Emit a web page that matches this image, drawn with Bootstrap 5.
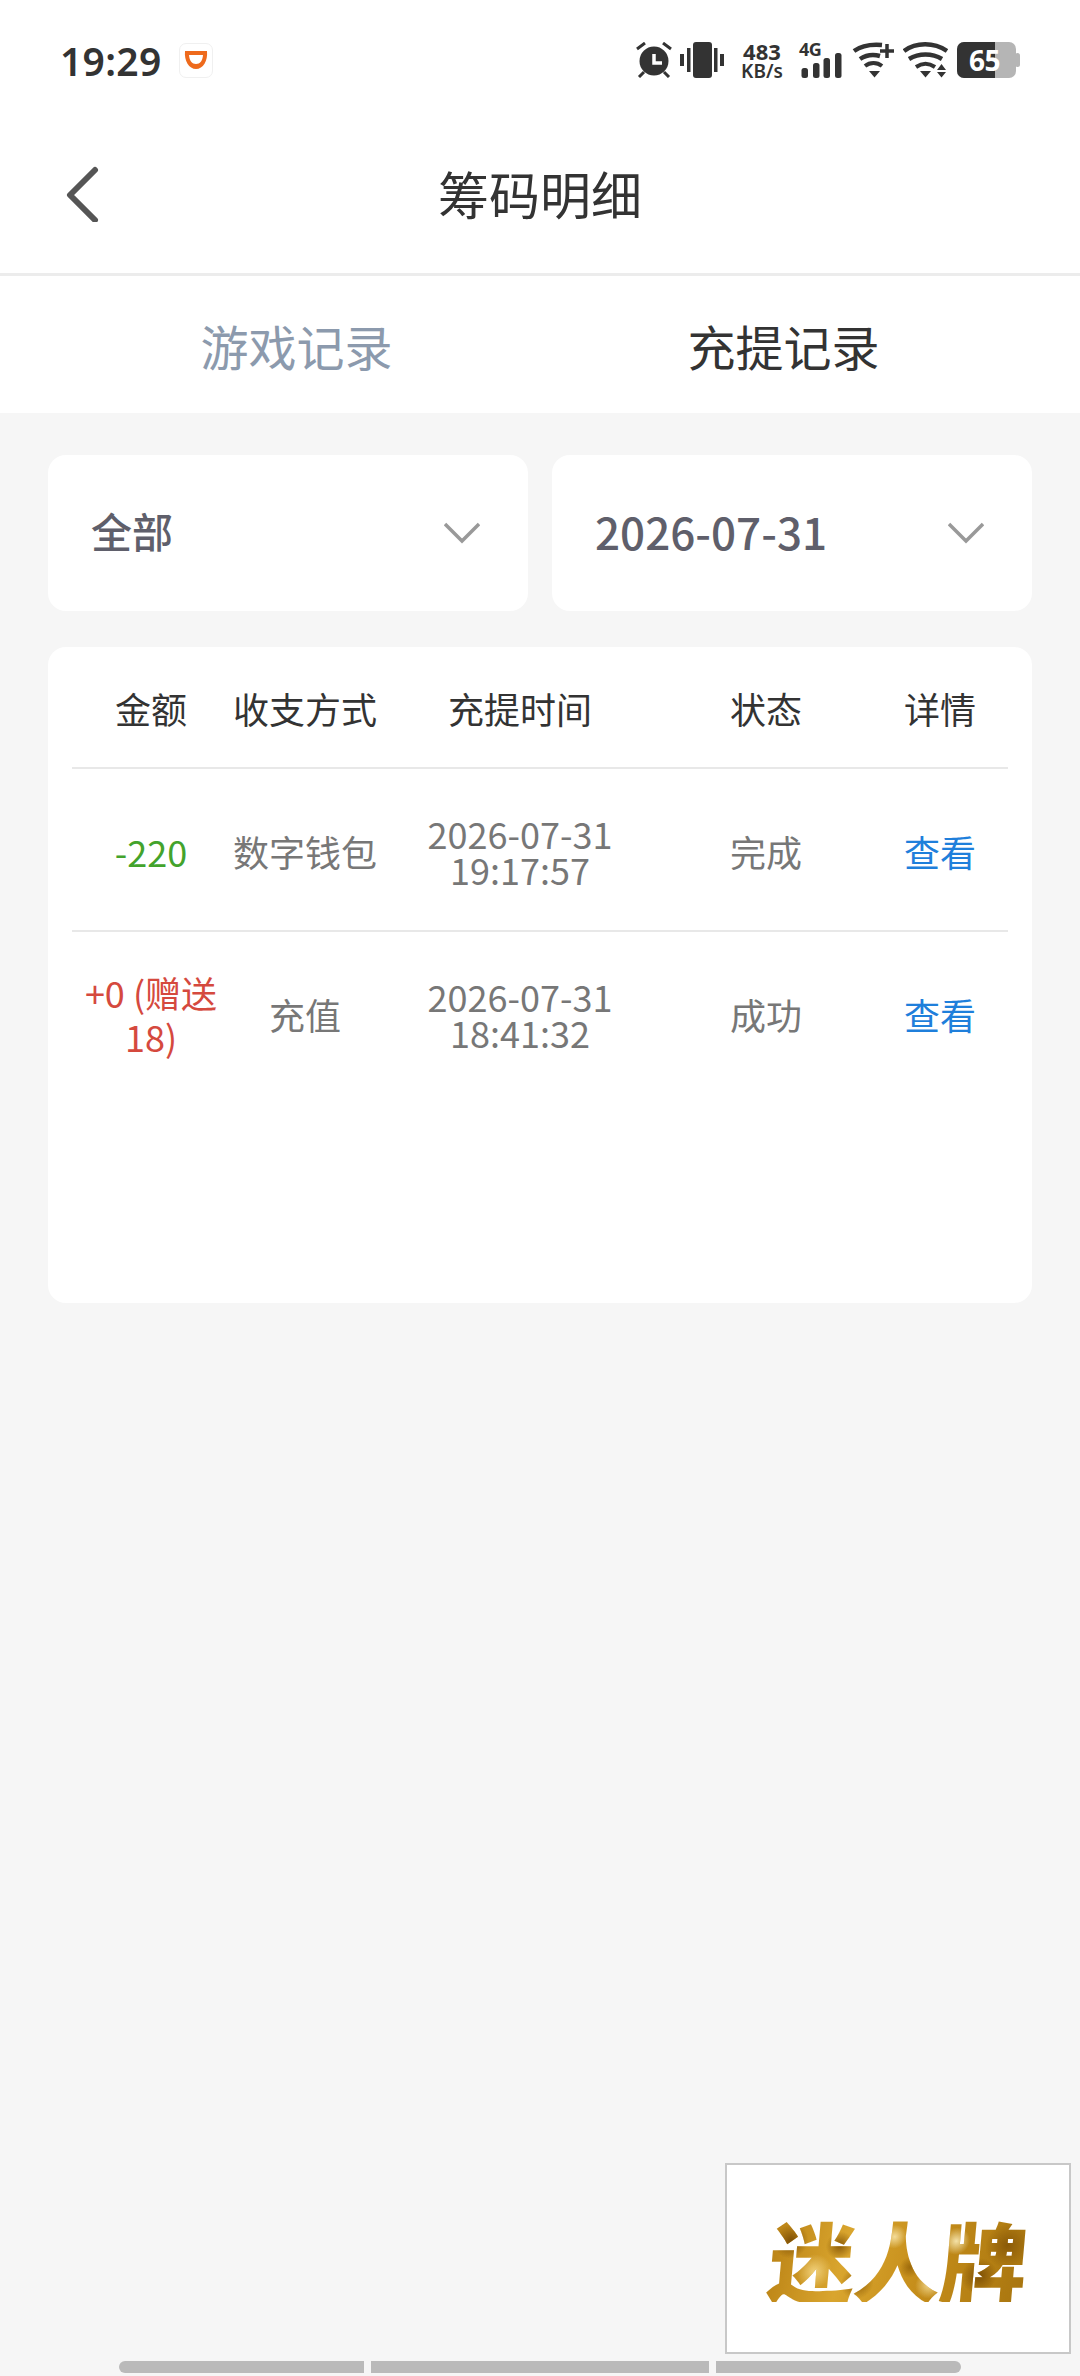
<!DOCTYPE html>
<html lang="zh"><head><meta charset="utf-8"><title>筹码明细</title>
<link href="https://cdn.jsdelivr.net/npm/bootstrap@5.3.0/dist/css/bootstrap.min.css" rel="stylesheet">
<style>
html,body{width:1080px;height:2376px;overflow:hidden;}
body{background:#f6f6f6;font-family:"Noto Sans CJK SC","Noto Sans",sans-serif;color:#333;position:relative;}
.statusbar{height:120px;padding-left:60px;background:#fff;}
.clock{font:600 39px/1 "Noto Sans","Roboto",sans-serif;color:#333;letter-spacing:.3px;}
.appicon{width:34px;height:35px;border:1px solid #f0f0f0;border-radius:7px;margin-left:17px;}
.sysicons{margin-left:auto;margin-right:60px;}
.speed{font:600 19px/18px "Noto Sans",sans-serif;color:#333;text-align:center;width:42px;margin:0 16px 0 17px;white-space:nowrap;}
.speed b{font-size:22px;font-weight:700;display:block;line-height:21px;}
.signalwrap{width:43px;height:36px;margin-right:10px;}
.fourg{left:0;top:-2px;font:700 18px/18px "Noto Sans",sans-serif;color:#333;letter-spacing:-.5px;}
.batterywrap{width:63px;height:36px;margin-left:9px;}
.battnum{left:12px;top:0;font:700 28px/36px "Noto Sans",sans-serif;color:#fff;letter-spacing:-.5px;}
.titlebar{height:156px;padding-bottom:7px;border-bottom:3px solid #ececec;background:#fff;}
.titletext{font-size:51px;line-height:1;color:#333;}
.backbtn{left:65px;top:46px;line-height:0;}
.tabbar{height:137px;padding:0 0 0 53px;background:#fff;}
.tabitem{font-size:48px;line-height:1;width:487px;}
.tabmuted{color:#8c9aad;}
.tabactive{color:#333;}
.content{padding:42px 48px 0;}
.pickrow{gap:24px;}
.picker{width:480px;height:156px;border-radius:18px;background:#fff;padding:0 48px 0 43px;font-size:41px;font-weight:500;color:#5f5f6b;}
.picklabel{padding-bottom:4px;}
.pickdate{font-size:44px;line-height:1;}
.recordcard{height:656px;margin-top:36px;background:#fff;border-radius:18px;padding:0 24px;}
.rowhead{height:122px;padding-top:2px;border-bottom:2px solid #e8e8e8;color:#333;font-size:36px;}
.rowdata{height:163px;padding-top:2px;border-bottom:2px solid #e8e8e8;color:#777;font-size:36px;}
.rowdata:last-child{border-bottom:0;padding-top:0;}
.c1{width:158px;text-align:center;line-height:44px;}
.c2{width:150px;text-align:center;}
.c3{width:280px;text-align:center;}
.c4{width:212px;text-align:center;}
.c5{width:136px;text-align:center;}
.stamp{line-height:36px;}
.greenamt{color:#43a32c;}
.redamt{color:#d5493e;}
.linkview{color:#1f7fdb;text-decoration:none;}
.logobox{position:absolute;left:725px;top:2163px;width:346px;height:191px;background:#fff;border:2px solid #c8c8c8;}
.logotext{font-weight:900;font-size:87px;line-height:1;letter-spacing:-1px;transform:skewX(-5deg);color:transparent;
background:
radial-gradient(circle at 8% 30%,#7d4f05 0,transparent 7%),
radial-gradient(circle at 18% 65%,#f0d07a 0,transparent 8%),
radial-gradient(circle at 27% 35%,#8a5a08 0,transparent 7%),
radial-gradient(circle at 35% 78%,#8f5e0a 0,transparent 9%),
radial-gradient(circle at 48% 25%,#f3dc9a 0,transparent 8%),
radial-gradient(circle at 55% 60%,#9c6a0c 0,transparent 7%),
radial-gradient(circle at 63% 80%,#f0d68c 0,transparent 8%),
radial-gradient(circle at 72% 30%,#f4e2a8 0,transparent 7%),
radial-gradient(circle at 82% 70%,#7d4f05 0,transparent 8%),
radial-gradient(circle at 92% 35%,#8a5a08 0,transparent 9%),
linear-gradient(100deg,#b98114,#d9a52e 30%,#c58d1a 60%,#a8750f);
-webkit-background-clip:text;background-clip:text;}
.scrollwrap{position:absolute;left:119px;top:2361px;height:12px;gap:7px;}
.scrollseg{height:12px;background:#bababa;}
.seg1{width:245px;border-radius:6px 0 0 6px;}
.seg2{width:338px;}
.seg3{width:245px;border-radius:0 6px 6px 0;}
</style></head>
<body>
<div class="statusbar d-flex align-items-center">
<span class="clock">19:29</span>
<span class="appicon d-inline-flex align-items-center justify-content-center">
<svg width="24" height="20" viewBox="0 0 24 20"><path d="M1 1h22c1 10-4 18-11 18S0 11 1 1z" fill="#ee6a1c"/><path d="M5 5h14c-.5 6-3 9-7 9s-6.500-3-7-9z" fill="#fff"/></svg></span>
<div class="sysicons d-flex align-items-center">
<svg class="me-2" width="36" height="36" viewBox="0 0 36 36" fill="#333"><circle cx="18" cy="19" r="14.500"/><path d="M1 7l8-6M35 7l-8-6M3 35l5-5M33 35l-5-5" stroke="#333" stroke-width="3" fill="none"/><path d="M18 12v9h8" stroke="#fff" stroke-width="3.500" fill="none"/></svg>
<svg width="44" height="36" viewBox="0 0 44 36" fill="#333"><rect x="13" y="0" width="19" height="36" rx="3"/><rect x="0" y="12" width="4" height="12"/><rect x="7" y="6" width="3.500" height="24"/><rect x="34" y="6" width="3.500" height="24"/><rect x="40" y="12" width="4" height="12"/></svg>
<div class="speed"><b>483</b>KB/s</div>
<div class="signalwrap position-relative"><span class="fourg position-absolute">4G</span>
<svg class="d-block" width="43" height="36" viewBox="0 0 43 36" fill="#333"><rect x="2.500" y="26" width="6.500" height="10" rx="2.500"/><rect x="14" y="21" width="6.500" height="15" rx="2.500"/><rect x="24.500" y="16" width="6.500" height="20" rx="2.500"/><rect x="36" y="11" width="6.500" height="25" rx="2.500"/></svg></div>
<svg width="43" height="36" viewBox="0 0 43 36" fill="none" stroke="#333" stroke-width="4.500"><path d="M2 9C9 4 19 2 30 3"/><path d="M8 17c6-4 13-5 20-3"/><path d="M13 24c5-4 12-4 17 0" stroke-width="4"/><path d="M17 29h11l-5.500 6.500z" fill="#333" stroke="none"/><path d="M28 9h14M35 2v14" stroke-width="3.500"/></svg>
<svg class="ms-2" width="45" height="36" viewBox="0 0 45 36" fill="none" stroke="#333" stroke-width="4.500"><path d="M1 9C13 0 31 0 44 9"/><path d="M6 17c10-6 23-6 33 0"/><path d="M13 25c6-4 13-4 19 0" stroke-width="4"/><path d="M17 29h11l-5.500 6.500z" fill="#333" stroke="none"/><path d="M34 28l4.500-6 4.500 6zM34 30l4.500 5.500 4.500-5.500z" fill="#333" stroke="none"/></svg>
<div class="batterywrap position-relative">
<svg class="d-block" width="63" height="36" viewBox="0 0 63 36"><rect width="59" height="36" rx="7" fill="#b5b5b5"/><rect x="58" y="11" width="5" height="14" rx="2.500" fill="#b5b5b5"/><path d="M7 0h31v36H7a7 7 0 0 1-7-7V7a7 7 0 0 1 7-7z" fill="#333"/></svg>
<span class="battnum position-absolute">65</span></div>
</div>
</div>
<div class="titlebar position-relative d-flex align-items-center justify-content-center">
<span class="backbtn position-absolute"><svg width="34" height="56" viewBox="0 0 34 56" fill="none" stroke="#555" stroke-width="6" stroke-linecap="round" stroke-linejoin="round"><path d="M30 4L5 29l25 25"/></svg></span>
<span class="titletext">筹码明细</span>
</div>
<div class="tabbar d-flex align-items-center">
<div class="tabitem tabmuted text-center">游戏记录</div>
<div class="tabitem tabactive text-center">充提记录</div>
</div>
<div class="content">
<div class="pickrow d-flex">
<div class="picker d-flex align-items-center justify-content-between"><span class="picklabel">全部</span><svg width="36" height="22" viewBox="0 0 36 22" fill="none" stroke="#999" stroke-width="3.500"><path d="M1 2l17 17L35 2"/></svg></div>
<div class="picker d-flex align-items-center justify-content-between"><span class="picklabel pickdate">2026-07-31</span><svg width="36" height="22" viewBox="0 0 36 22" fill="none" stroke="#999" stroke-width="3.500"><path d="M1 2l17 17L35 2"/></svg></div>
</div>
<div class="recordcard">
<div class="rowhead d-flex align-items-center"><div class="c1">金额</div><div class="c2">收支方式</div><div class="c3">充提时间</div><div class="c4">状态</div><div class="c5">详情</div></div>
<div class="rowdata d-flex align-items-center"><div class="c1 greenamt">-220</div><div class="c2">数字钱包</div><div class="c3 stamp">2026-07-31<br>19:17:57</div><div class="c4">完成</div><div class="c5"><a class="linkview" href="#">查看</a></div></div>
<div class="rowdata d-flex align-items-center"><div class="c1 redamt">+0 (赠送18)</div><div class="c2">充值</div><div class="c3 stamp">2026-07-31<br>18:41:32</div><div class="c4">成功</div><div class="c5"><a class="linkview" href="#">查看</a></div></div>
</div>
</div>
<div class="logobox d-flex align-items-center justify-content-center"><span class="logotext">迷人牌</span></div>
<div class="scrollwrap d-flex"><div class="scrollseg seg1"></div><div class="scrollseg seg2"></div><div class="scrollseg seg3"></div></div>
<script src="https://cdn.jsdelivr.net/npm/bootstrap@5.3.0/dist/js/bootstrap.bundle.min.js"></script>
</body></html>
